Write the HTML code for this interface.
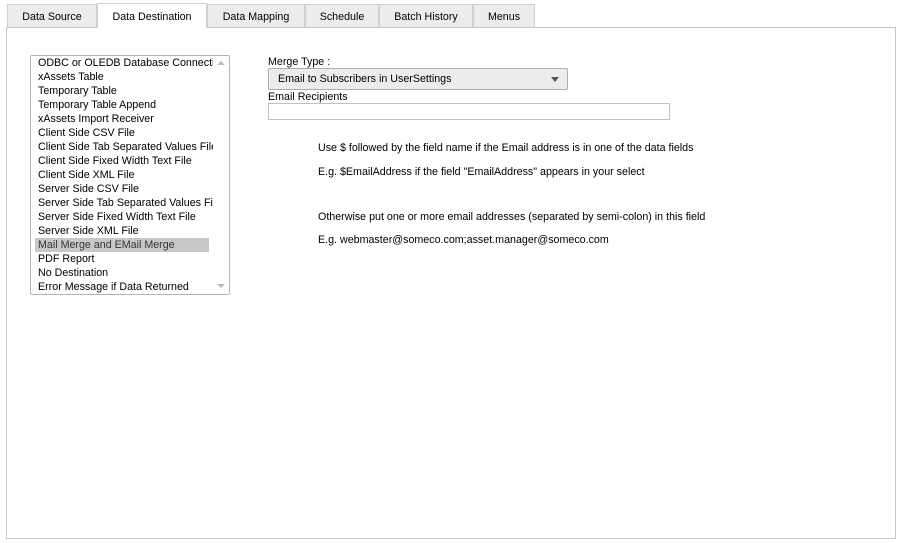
<!DOCTYPE html>
<html><head><style>
body{margin:0;width:900px;height:543px;background:#fff;font-family:"Liberation Sans",sans-serif;font-size:10.7px;color:#000;position:relative;overflow:hidden}
.a{position:absolute;white-space:nowrap}
.tab{position:absolute;top:4px;height:23px;background:#ececec;border:1px solid #d0d0d0;border-bottom:none;box-sizing:border-box;text-align:center;line-height:24px}
.panel{position:absolute;left:6px;top:27px;width:890px;height:512px;border:1px solid #c8c8c8;box-sizing:border-box}
.list{position:absolute;left:30px;top:55px;width:200px;height:240px;border:1px solid #b4b4b4;border-radius:2px;box-sizing:border-box;overflow:hidden}
.list div{position:absolute;left:7px;height:14px;line-height:15px;white-space:nowrap}
</style></head><body>
<div class="panel"></div>
<div class="tab" style="left:7px;width:90px">Data Source</div>
<div class="tab" style="left:97px;top:3px;height:25px;width:110px;background:#fff;line-height:26px">Data Destination</div>
<div class="tab" style="left:207px;width:98px">Data Mapping</div>
<div class="tab" style="left:305px;width:74px">Schedule</div>
<div class="tab" style="left:379px;width:94px">Batch History</div>
<div class="tab" style="left:473px;width:62px">Menus</div>
<div class="list">
<div style="left:4px;top:182px;width:174px;height:14px;background:#c8c8c8"></div>
<div style="top:0px">ODBC or OLEDB Database Connectio</div>
<div style="top:14px">xAssets Table</div>
<div style="top:28px">Temporary Table</div>
<div style="top:42px">Temporary Table Append</div>
<div style="top:56px">xAssets Import Receiver</div>
<div style="top:70px">Client Side CSV File</div>
<div style="top:84px">Client Side Tab Separated Values File</div>
<div style="top:98px">Client Side Fixed Width Text File</div>
<div style="top:112px">Client Side XML File</div>
<div style="top:126px">Server Side CSV File</div>
<div style="top:140px">Server Side Tab Separated Values File</div>
<div style="top:154px">Server Side Fixed Width Text File</div>
<div style="top:168px">Server Side XML File</div>
<div style="top:182px;color:#333">Mail Merge and EMail Merge</div>
<div style="top:196px">PDF Report</div>
<div style="top:210px">No Destination</div>
<div style="top:224px">Error Message if Data Returned</div>
<div style="left:182px;top:0;width:17px;height:240px;background:#fff"></div>
<div style="left:186px;top:5px;width:0;height:0;border-left:4px solid transparent;border-right:4px solid transparent;border-bottom:4px solid #bbb"></div>
<div style="left:186px;top:228px;width:0;height:0;border-left:4px solid transparent;border-right:4px solid transparent;border-top:4px solid #bbb"></div>
</div>
<div class="a" style="left:268px;top:56px">Merge Type :</div>
<div class="a" style="left:268px;top:68px;width:300px;height:22px;border:1px solid #adadad;border-radius:2px;background:#ececec;box-sizing:border-box;line-height:21px;padding-left:9px">Email to Subscribers in UserSettings
<div style="position:absolute;right:8px;top:8px;border-left:4px solid transparent;border-right:4px solid transparent;border-top:5px solid #555"></div></div>
<div class="a" style="left:268px;top:91px">Email Recipients</div>
<div class="a" style="left:268px;top:103px;width:402px;height:17px;border:1px solid #c0c0c0;box-sizing:border-box"></div>
<div class="a" style="left:318px;top:142px">Use $ followed by the field name if the Email address is in one of the data fields</div>
<div class="a" style="left:318px;top:166px">E.g. $EmailAddress if the field "EmailAddress" appears in your select</div>
<div class="a" style="left:318px;top:211px">Otherwise put one or more email addresses (separated by semi-colon) in this field</div>
<div class="a" style="left:318px;top:234px">E.g. webmaster@someco.com;asset.manager@someco.com</div>
</body></html>
